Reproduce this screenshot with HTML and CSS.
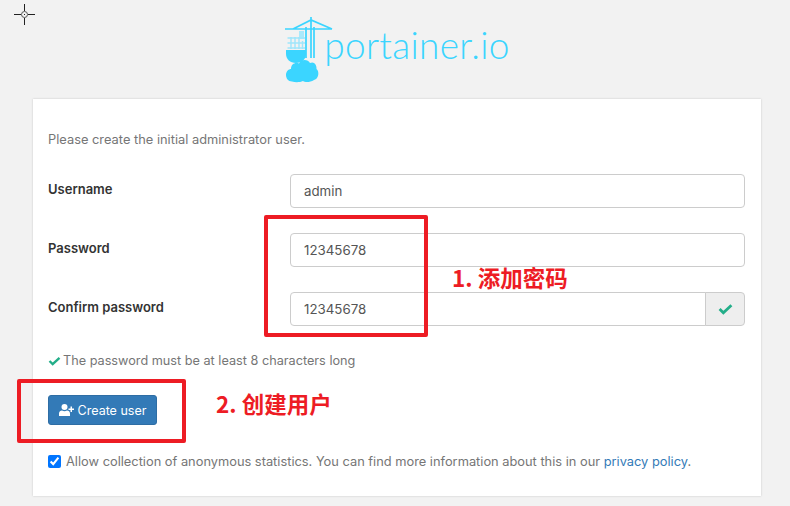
FILE: index.html
```html
<!DOCTYPE html>
<html lang="en">
<head>
  <meta charset="UTF-8" />
  <title>Portainer</title>
  <link rel="stylesheet" href="styles.css">
</head>
<body>

  <svg class="cursor" width="21" height="21" viewBox="0 0 21 21">
    <path d="M10.500 0V7M10.500 14V21M0 10.500H7M14 10.500H21" stroke="#222" fill="none"/>
    <circle cx="10.500" cy="10.500" r="3" stroke="#555" fill="none"/>
    <rect x="10" y="10" width="1" height="1" fill="#222"/>
  </svg>

  <div class="logo">
    <svg class="logo-mark" width="48" height="66" viewBox="0 0 48 66">
      <path d="M0 12H47M26 0V41M21 10V41M29 10V41M8 12L26 3L47 12" stroke="#3bd5ff" stroke-width="1.7" fill="none"/>
      <rect x="14" y="14" width="5" height="8" fill="#a9e9fb"/>
      <path d="M2.500 21H20M2.500 26H20M2.500 31H20M6 20V32M10 20V32M14 20V32M17.500 24V32" stroke="#9fe6fb" stroke-width="1.4" fill="none"/>
      <path d="M1 33H21V37C21 42 17 46 11 46C5 46 1 42 1 37Z" fill="#3bd5ff"/>
      <path d="M7 64.500C3 64.500 1 61 1 58C1 54 4 52 6 52C6 47 10 45 14 46.500C16 42 23 42 25 46C29 44 32 48 31.500 52C34.500 54 34 62 29 63C25 65.500 20 65.500 18 64C15 65.500 10 65.500 7 64.500Z" fill="#3bd5ff"/>
    </svg>
    <span class="logo-text">portainer.io</span>
  </div>

  <div class="card">
    <p class="intro">Please create the initial administrator user.</p>

    <div class="form-row">
      <label>Username</label>
      <input class="form-control" type="text" value="admin">
    </div>
    <div class="form-row">
      <label>Password</label>
      <input class="form-control" type="text" value="12345678">
    </div>
    <div class="form-row">
      <label>Confirm password</label>
      <div class="input-group">
        <input class="form-control" type="text" value="12345678">
        <span class="addon">
          <svg width="15" height="12" viewBox="0 0 14 11"><path d="M1.500 5.500L5 9L12.500 2" stroke="#23ae89" stroke-width="2.600" fill="none"/></svg>
        </span>
      </div>
    </div>

    <p class="hint">
      <svg width="13" height="10" viewBox="0 0 14 11"><path d="M1.500 5.500L5 9L12.500 2" stroke="#23ae89" stroke-width="2.600" fill="none"/></svg>
      <span>The password must be at least 8 characters long</span>
    </p>

    <button class="btn">
      <svg width="15" height="12" viewBox="0 0 15 12" fill="#fff">
        <circle cx="5.500" cy="3" r="3"/>
        <path d="M0 12V9.500C0 7.500 1.500 6.500 3 6.500C4.500 7.500 6.500 7.500 8 6.500C9.500 6.500 11 7.500 11 9.500V12Z"/>
        <path d="M11.500 2.500H13V4.500H15V6H13V8H11.500V6H9.500V4.500H11.500Z"/>
      </svg>
      Create user
    </button>

    <label class="consent">
      <input type="checkbox" checked>
      <span>Allow collection of anonymous statistics. You can find more information about this in our <a href="#">privacy policy</a>.</span>
    </label>
  </div>

  <div class="mark mark-password"></div>
  <div class="mark mark-button"></div>
  <div class="note note-password">1. 添加密码</div>
  <div class="note note-button">2. 创建用户</div>

</body>
</html>
```

FILE: styles.css
```css
body {
  margin: 0;
  padding: 0 29px 0 33px;
  height: 506px;
  box-sizing: border-box;
  background-color: #f2f2f2;
  font-family: "Inter", "Noto Sans", sans-serif;
  font-size: 12.8px;
  color: #767676;
  position: relative;
  overflow: hidden;
}

.cursor {
  position: absolute;
  top: 4px;
  left: 14px;
}

.logo {
  display: flex;
  justify-content: center;
  align-items: flex-start;
  height: 82px;
  padding: 17px 0 0 5px;
  box-sizing: border-box;
  margin-left: -33px;
  margin-right: -29px;
}

.logo-text {
  font-family: "Lato", sans-serif;
  font-weight: 300;
  font-size: 37px;
  letter-spacing: 0.3px;
  line-height: 40px;
  margin: 8px 0 0 -9px;
  color: #3bd5ff;
}

.card {
  margin-top: 17px;
  height: 397px;
  box-sizing: border-box;
  padding: 32px 16px 0 15px;
  background: #fff;
  box-shadow: 0 0 2px rgba(0, 0, 0, 0.18);
}

.intro {
  margin: 0 0 26px;
  font-size: 12.85px;
  line-height: 17px;
}

.form-row {
  display: flex;
  align-items: center;
  height: 34px;
  margin-bottom: 25px;
}

.form-row label {
  width: 242px;
  flex-shrink: 0;
  margin-bottom: 4px;
  font-size: 13px;
  font-weight: 600;
  color: #333;
}

.form-control {
  flex: 1;
  min-width: 0;
  height: 34px;
  box-sizing: border-box;
  padding: 0 13px;
  border: 1px solid #ccc;
  border-radius: 4px;
  font-family: inherit;
  font-size: 13.3px;
  color: #555;
  background: #fff;
}

.input-group {
  flex: 1;
  display: flex;
}

.input-group .form-control {
  border-radius: 4px 0 0 4px;
}

.addon {
  width: 40px;
  box-sizing: border-box;
  display: flex;
  align-items: center;
  justify-content: center;
  background: #eee;
  border: 1px solid #ccc;
  border-radius: 0 4px 4px 0;
  margin-left: -1px;
}

.hint {
  display: flex;
  align-items: center;
  gap: 2px;
  margin: 26px 0;
  font-size: 12.7px;
  line-height: 17px;
}

.btn {
  display: flex;
  align-items: center;
  gap: 4px;
  width: 109px;
  height: 30px;
  justify-content: center;
  padding: 0;
  border: 1px solid #2e6da4;
  border-radius: 3px;
  background: #337ab7;
  color: #fff;
  font-family: inherit;
  font-size: 12.5px;
}

.consent {
  display: flex;
  align-items: center;
  gap: 5px;
  margin-top: 27px;
  font-size: 12.84px;
  line-height: 19px;
}

.consent input {
  margin: 0;
}

.consent a {
  color: #337ab7;
  text-decoration: none;
}

.mark {
  position: absolute;
  box-sizing: border-box;
  border: 4px solid #ed1c24;
  border-radius: 2px;
}

.mark-password {
  left: 264px;
  top: 215px;
  width: 164px;
  height: 122px;
}

.mark-button {
  left: 17px;
  top: 379px;
  width: 169px;
  height: 64px;
}

.note {
  position: absolute;
  font-family: "Noto Sans CJK SC", sans-serif;
  font-weight: 700;
  font-size: 22.5px;
  line-height: 30px;
  color: #ed1c24;
}

.note-password {
  left: 452px;
  top: 262px;
}

.note-button {
  left: 216px;
  top: 388px;
}
```
